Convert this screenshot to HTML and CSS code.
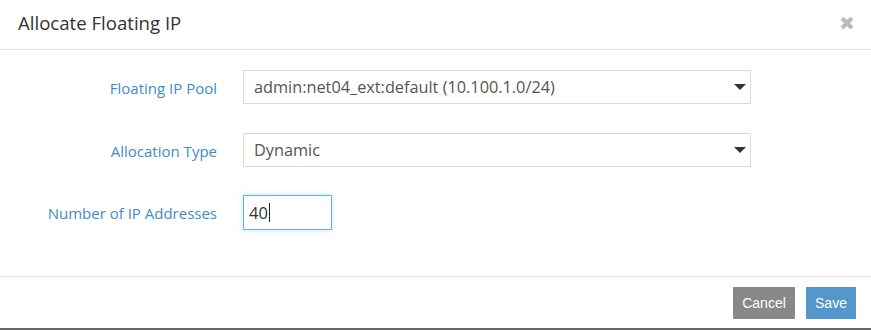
FILE: index.html
```html
<!DOCTYPE html>
<html lang="en">
<head>
    <meta charset="UTF-8" />
    <meta name="viewport" content="width=device-width, initial-scale=1.0" />
    <title>Allocate Floating IP</title>
    <link rel="stylesheet" href="styles.css">
</head>
<body>
    <div class="modal">
        <div class="modal-header">
            <h4 class="modal-title">Allocate Floating IP</h4>
            <span class="close">&#10006;</span>
        </div>
        <div class="modal-body">
            <div class="form-row">
                <label class="form-label">Floating IP Pool</label>
                <div class="select">
                    <span>admin:net04_ext:default (10.100.1.0/24)</span>
                    <span class="caret"></span>
                </div>
            </div>
            <div class="form-row">
                <label class="form-label">Allocation Type</label>
                <div class="select">
                    <span>Dynamic</span>
                    <span class="caret"></span>
                </div>
            </div>
            <div class="form-row row-last">
                <label class="form-label">Number of IP Addresses</label>
                <div class="text-input">40<span class="cursor"></span></div>
            </div>
        </div>
        <div class="modal-footer">
            <button type="button" class="btn btn-cancel">Cancel</button>
            <button type="button" class="btn btn-save">Save</button>
        </div>
    </div>
</body>
</html>
```

FILE: styles.css
```css
* {
    box-sizing: border-box;
}

body {
    margin: 0;
    padding: 0;
    background: #fff;
    font-family: 'Open Sans', 'Noto Sans', sans-serif;
}

.modal {
    width: 871px;
    height: 330px;
    border-bottom: 2px solid #666;
}

.modal-header {
    height: 50px;
    border-bottom: 1px solid #e5e5e5;
    display: flex;
    align-items: center;
    justify-content: space-between;
    padding: 0 16px 0 18px;
}

.modal-title {
    margin: 0;
    font-size: 18.6px;
    font-weight: 400;
    color: #333;
    padding-bottom: 4px;
}

.close {
    color: #bbb;
    font-size: 19px;
    font-weight: bold;
    font-family: 'DejaVu Sans', sans-serif;
    padding-bottom: 3px;
}

.modal-body {
    padding: 20px 0 0;
    height: 226px;
    display: flex;
    flex-direction: column;
    gap: 29px;
}

.form-row {
    display: flex;
    align-items: center;
}

.row-last {
    margin-top: -1px;
}

.form-label {
    width: 243px;
    text-align: right;
    padding-right: 26px;
    font-size: 15px;
    color: #428bca;
    padding-top: 1px;
}

.select {
    width: 508px;
    height: 34px;
    border: 1px solid #d9d9d9;
    display: flex;
    align-items: center;
    justify-content: space-between;
    padding: 0 4px 0 10px;
    font-size: 16.3px;
    color: #555;
}

.caret {
    width: 0;
    height: 0;
    border-left: 6px solid transparent;
    border-right: 6px solid transparent;
    border-top: 6px solid #333;
}

.text-input {
    width: 89px;
    height: 35px;
    border: 1px solid #66afe9;
    box-shadow: 0 0 6px rgba(102, 175, 233, 0.35);
    display: flex;
    align-items: center;
    padding-left: 5px;
    font-size: 16.5px;
    color: #333;
}

.cursor {
    display: inline-block;
    width: 1px;
    height: 19px;
    background: #222;
    margin-left: 1px;
}

.modal-footer {
    border-top: 1px solid #e5e5e5;
    display: flex;
    justify-content: flex-end;
    gap: 11px;
    padding: 10px 15px 0 0;
}

.btn {
    height: 32px;
    border: none;
    border-radius: 0;
    font-family: 'Liberation Sans', Arial, sans-serif;
    font-size: 14px;
    color: #fff;
    padding: 0;
}

.btn-cancel {
    background: #888;
    width: 62px;
}

.btn-save {
    background: #5497cb;
    width: 50px;
}
```
